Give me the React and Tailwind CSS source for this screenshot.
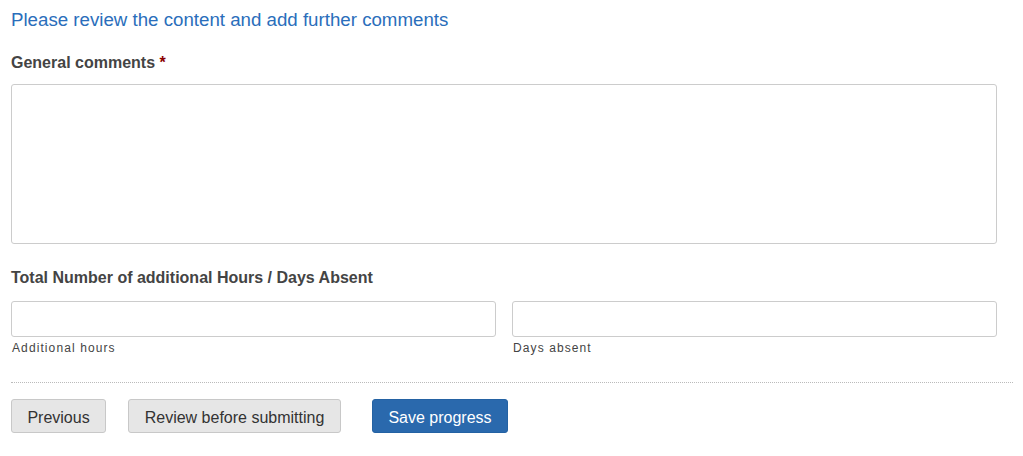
import React from 'react';

// Review step of the form: comments, absence figures and navigation buttons
export default function App() {
  return (
    <div className="min-h-screen bg-white pl-[11px] pr-[10px] pt-[10px] font-['Liberation_Sans',Arial,sans-serif]">
      <h2 className="text-[18.7px] leading-[20px] text-[#2a6ebb]">
        Please review the content and add further comments
      </h2>

      <label htmlFor="comments" className="mt-[23px] block text-[16px] font-bold leading-[20px] text-[#444]">
        General comments <span className="text-[#8b0000]">*</span>
      </label>
      <textarea
        id="comments"
        className="mt-[11px] block h-[160px] w-[986px] resize-none rounded-[3px] border border-[#ccc] bg-white"
      />

      <div className="mt-[24px] text-[16px] font-bold leading-[20px] text-[#444]">
        Total Number of additional Hours / Days Absent
      </div>

      <div className="mt-[13px] flex w-[986px] gap-[16px]">
        <div className="flex-1">
          <input id="hours" type="text" className="block h-[36px] w-full rounded-[3px] border border-[#ccc] bg-white" />
          <label htmlFor="hours" className="mt-[4px] block pl-[1px] text-[12px] leading-[14px] tracking-[1.1px] text-[#444]">
            Additional hours
          </label>
        </div>
        <div className="flex-1">
          <input id="days" type="text" className="block h-[36px] w-full rounded-[3px] border border-[#ccc] bg-white" />
          <label htmlFor="days" className="mt-[4px] block pl-[1px] text-[12px] leading-[14px] tracking-[1.1px] text-[#444]">
            Days absent
          </label>
        </div>
      </div>

      <div className="mt-[27px] border-t border-dotted border-[#bbb]" />

      <div className="mt-[16px] flex items-center">
        <button className="h-[34px] w-[95px] rounded-[3px] border border-[#c8c8c8] bg-[#e6e6e6] pt-[3px] text-[16px] text-[#333]">
          Previous
        </button>
        <button className="ml-[22px] h-[34px] w-[213px] rounded-[3px] border border-[#c8c8c8] bg-[#e6e6e6] pt-[3px] text-[16px] text-[#333]">
          Review before submitting
        </button>
        <button className="ml-[31px] h-[34px] w-[136px] rounded-[3px] border border-[#2462a3] bg-[#2a69ad] pt-[3px] text-[16px] text-white">
          Save progress
        </button>
      </div>
    </div>
  );
}
